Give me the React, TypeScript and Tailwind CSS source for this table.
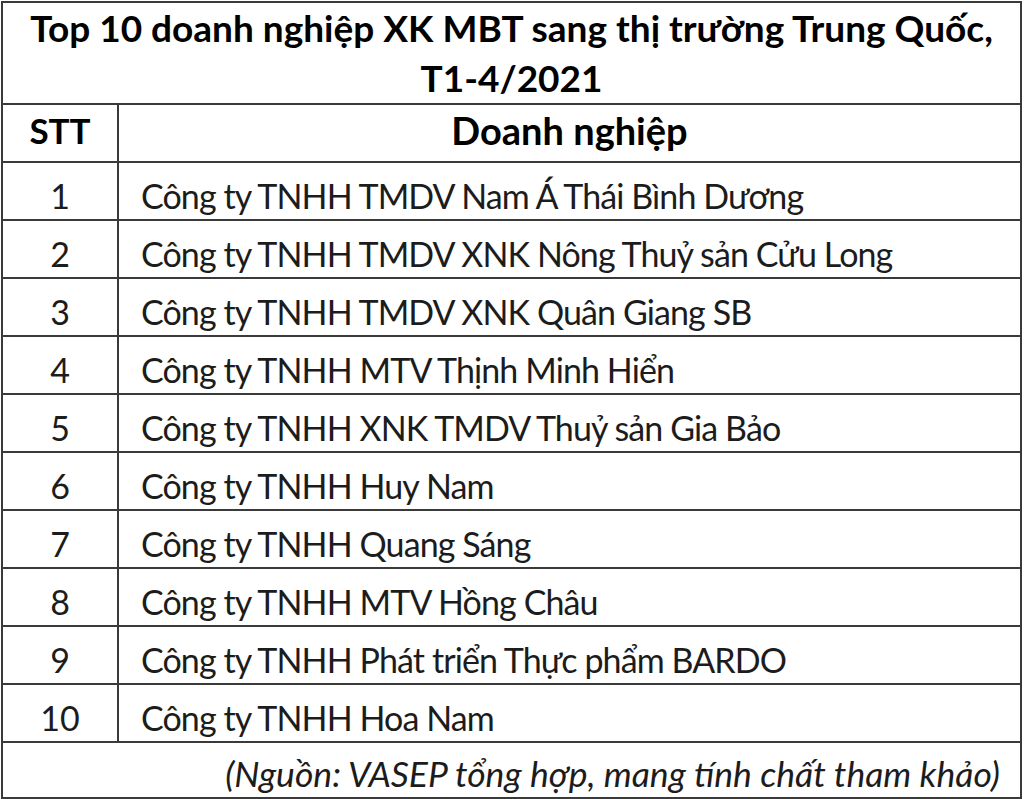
const ROWS = [
  'Công ty TNHH TMDV Nam Á Thái Bình Dương',
  'Công ty TNHH TMDV XNK Nông Thuỷ sản Cửu Long',
  'Công ty TNHH TMDV XNK Quân Giang SB',
  'Công ty TNHH MTV Thịnh Minh Hiển',
  'Công ty TNHH XNK TMDV Thuỷ sản Gia Bảo',
  'Công ty TNHH Huy Nam',
  'Công ty TNHH Quang Sáng',
  'Công ty TNHH MTV Hồng Châu',
  'Công ty TNHH Phát triển Thực phẩm BARDO',
  'Công ty TNHH Hoa Nam',
]

export default function App() {
  return (
    <div className="w-[1024px] h-[799px] bg-white p-px font-['Lato',sans-serif] text-[#1c1c1c]">
      <div className="h-[798px] w-[1021px] border-2 border-[#3a3a3a] flex flex-col">
        <div className="h-[101px] flex flex-col items-center text-[37px] font-bold text-black leading-[50px]">
          <div>Top 10 doanh nghiệp XK MBT sang thị trường Trung Quốc,</div>
          <div>T1-4/2021</div>
        </div>
        <div className="grid grid-cols-[116px_1fr] grid-rows-[58px_repeat(10,58px)] border-t-2 border-[#3a3a3a]">
          <div className="flex items-center justify-center pb-[6px] border-r-2 border-b-2 border-[#3a3a3a] text-[35px] font-bold text-black">
            STT
          </div>
          <div className="flex items-center justify-center pb-[6px] border-b-2 border-[#3a3a3a] text-[38px] font-bold text-black">
            Doanh nghiệp
          </div>
          {ROWS.map((name, i) => (
            <div key={name} className="contents">
              <div className="flex items-center justify-center pt-[8px] border-r-2 border-b-2 border-[#3a3a3a] text-[34px]">
                {i + 1}
              </div>
              <div className="flex items-center pl-[22px] pt-[8px] border-b-2 border-[#3a3a3a] text-[34px] tracking-[-0.9px] whitespace-nowrap">
                {name}
              </div>
            </div>
          ))}
        </div>
        <div className="flex-1 flex items-center justify-end pr-[20px] pt-[4px] text-[35.5px] italic">
          (Nguồn: VASEP tổng hợp, mang tính chất tham khảo)
        </div>
      </div>
    </div>
  )
}
